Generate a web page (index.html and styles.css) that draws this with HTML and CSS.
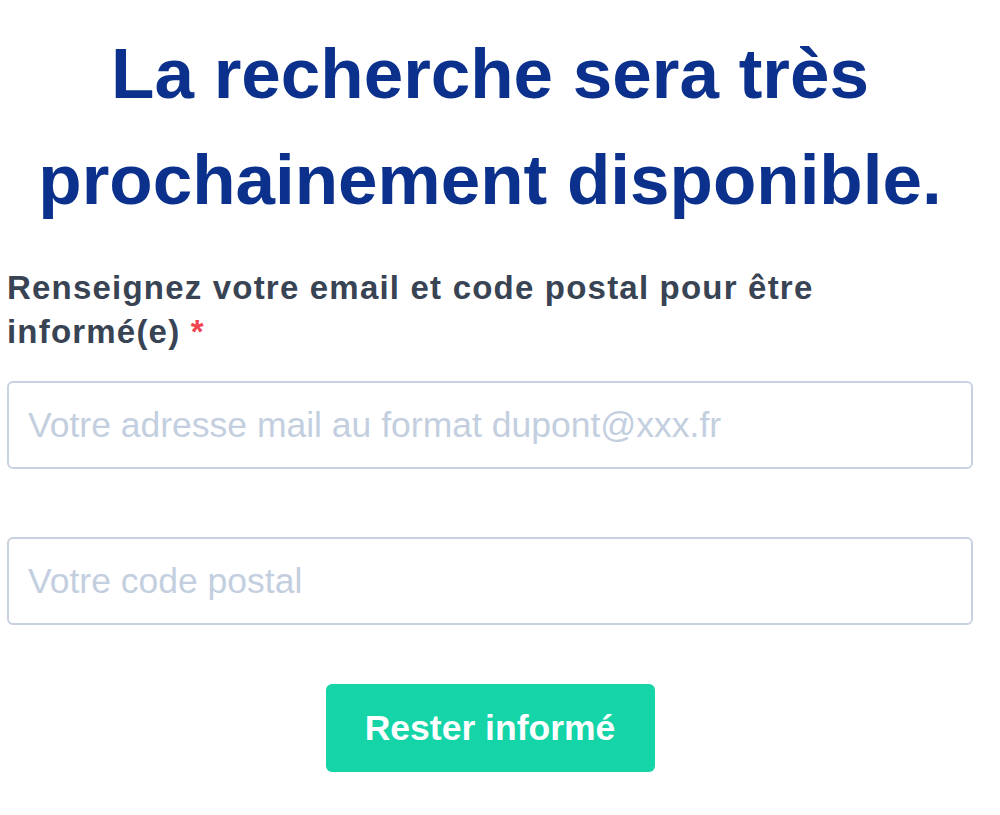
FILE: index.html
```html
<!DOCTYPE html>
<html lang="fr">
<head>
<meta charset="utf-8">
<link rel="stylesheet" href="styles.css">
</head>
<body>
<main class="page">
  <h1 class="title">La recherche sera très prochainement disponible.</h1>
  <form class="form">
    <label class="label" for="email">Renseignez votre email et code postal pour être informé(e) <span class="req">*</span></label>
    <input class="field field-email" id="email" type="email" placeholder="Votre adresse mail au format dupont@xxx.fr">
    <input class="field field-zip" type="text" placeholder="Votre code postal">
    <div class="actions">
      <button class="btn" type="button">Rester informé</button>
    </div>
  </form>
</main>
</body>
</html>
```
FILE: styles.css
```css
html, body {
  margin: 0;
  padding: 0;
  background: #ffffff;
}
body {
  font-family: "Liberation Sans", Arial, sans-serif;
}
.page {
  width: 966px;
  margin-left: 7px;
  padding-top: 21px;
}
.title {
  margin: 0;
  text-align: center;
  font-size: 71px;
  line-height: 106px;
  font-weight: 700;
  color: #0b318c;
}
.form {
  display: flex;
  flex-direction: column;
  margin-top: 33px;
}
.label {
  font-size: 33px;
  line-height: 44px;
  font-weight: 700;
  letter-spacing: 1.2px;
  color: #384354;
}
.req {
  color: #f0454f;
}
.field {
  box-sizing: border-box;
  height: 88px;
  width: 100%;
  margin: 0;
  border: 2px solid #c8d2e0;
  border-radius: 6px;
  padding: 0 19px;
  font-family: "Liberation Sans", Arial, sans-serif;
  font-size: 35.5px;
  color: #1f2937;
  background: #ffffff;
  outline: none;
}
.field::placeholder {
  color: #c3cfdf;
}
.field-email {
  margin-top: 27px;
}
.field-zip {
  margin-top: 68px;
}
.actions {
  display: flex;
  justify-content: center;
  margin-top: 59px;
}
.btn {
  width: 329px;
  height: 88px;
  border: 0;
  border-radius: 6px;
  background: #14d4a8;
  color: #ffffff;
  font-family: "Liberation Sans", Arial, sans-serif;
  font-size: 35.5px;
  font-weight: 700;
  cursor: pointer;
}
```
